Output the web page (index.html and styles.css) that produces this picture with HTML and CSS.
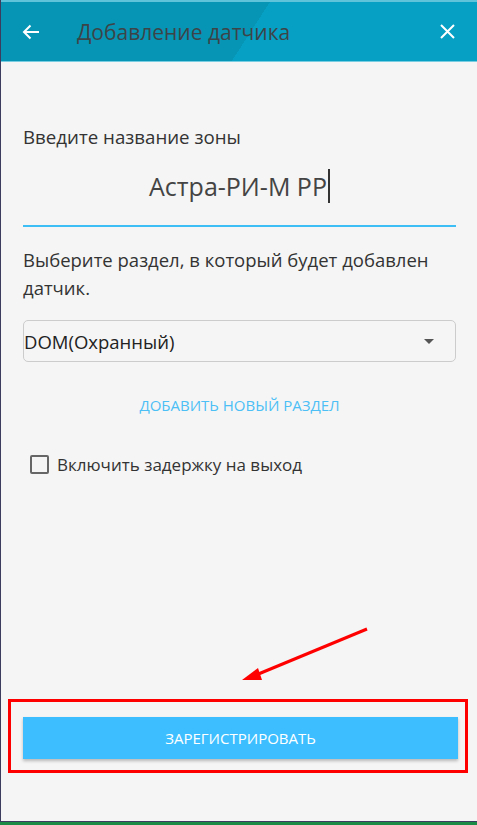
FILE: index.html
```html
<!DOCTYPE html>
<html lang="ru">
<head>
    <meta charset="UTF-8">
    <meta name="viewport" content="width=device-width, initial-scale=1.0">
    <title>Добавление датчика</title>
    <link rel="stylesheet" href="styles.css">
</head>
<body>
    <div class="screen">
        <div class="top-line"></div>
        <header class="app-bar">
            <button class="icon-btn" aria-label="Назад">
                <svg width="18" height="16" viewBox="0 0 18 16">
                    <path d="M17 8H2M8.5 1.5L2 8l6.5 6.5" fill="none" stroke="#fff" stroke-width="2"/>
                </svg>
            </button>
            <h1 class="app-title">Добавление датчика</h1>
            <button class="icon-btn close" aria-label="Закрыть">
                <svg width="15" height="15" viewBox="0 0 15 15">
                    <path d="M1 1l13 13M14 1L1 14" fill="none" stroke="#fff" stroke-width="2"/>
                </svg>
            </button>
        </header>
        <div class="app-bar-edge"></div>

        <main class="content">
            <label class="field-label" for="zone">Введите название зоны</label>
            <div class="zone-input">
                <span id="zone">Астра-РИ-М РР</span><span class="caret"></span>
            </div>

            <p class="hint">Выберите раздел, в который будет добавлен датчик.</p>

            <div class="select">
                <span>DOM(Охранный)</span>
                <span class="select-arrow"></span>
            </div>

            <a href="#" class="add-link">ДОБАВИТЬ НОВЫЙ РАЗДЕЛ</a>

            <label class="check-row">
                <span class="checkbox"></span>
                Включить задержку на выход
            </label>

            <div class="footer">
                <div class="highlight">
                    <button class="register">ЗАРЕГИСТРИРОВАТЬ</button>
                </div>
            </div>
        </main>

        <!-- annotation arrow pointing at the button -->
        <svg class="pointer" width="477" height="825" viewBox="0 0 477 825">
            <path d="M367 629L256 675" stroke="#f00" stroke-width="3" fill="none"/>
            <path d="M242 680L258 668L262 680Z" fill="#f00"/>
        </svg>
    </div>
    <div class="taskbar"></div>
</body>
</html>
```

FILE: styles.css
```css
body {
    margin: 0;
    font-family: 'Open Sans', sans-serif;
    background-color: #f5f5f5;
    color: #333;
}

.screen {
    position: relative;
    display: flex;
    flex-direction: column;
    height: 822px;
    box-sizing: border-box;
    border-left: 1px solid #3b3c5e;
    border-bottom: 1px solid #3b3c5e;
}

.top-line {
    height: 2px;
    background-color: #5fc4da;
}

.app-bar {
    display: flex;
    align-items: center;
    height: 59px;
    background: linear-gradient(122.8deg, #0795b5 226px, #05a0c4 226px);
}

.app-bar-edge {
    height: 1px;
    background-color: #78cde0;
}

.icon-btn {
    background: none;
    border: none;
    padding: 0;
    margin: 0 0 0 21px;
    width: 18px;
    height: 16px;
    display: flex;
}

.icon-btn.close {
    margin: 0 22px 0 auto;
    width: 15px;
    height: 15px;
}

.app-title {
    margin: 0 0 0 37px;
    font-size: 21px;
    font-weight: normal;
    color: #3d4448;
}

.content {
    flex: 1;
    display: flex;
    flex-direction: column;
    padding: 0 21px 0 22px;
}

.field-label {
    margin-top: 62px;
    font-size: 18.7px;
    line-height: 26px;
}

.zone-input {
    display: flex;
    justify-content: center;
    align-items: center;
    height: 54px;
    margin-top: 9px;
    border-bottom: 2px solid #3dbff5;
    font-size: 25px;
    color: #444;
    padding-bottom: 12px;
}

.caret {
    width: 2px;
    height: 34px;
    margin-left: 1px;
    background-color: #333;
}

.hint {
    margin: 19px 0 0;
    font-size: 18.5px;
    line-height: 28px;
}

.select {
    display: flex;
    align-items: center;
    height: 42px;
    margin-top: 18px;
    box-sizing: border-box;
    border: 1px solid #ccc;
    border-radius: 5px;
    font-size: 18.5px;
    color: #222;
}

.select-arrow {
    margin: 0 21px 0 auto;
    border-left: 5px solid transparent;
    border-right: 5px solid transparent;
    border-top: 5px solid #555;
}

.add-link {
    align-self: center;
    margin-top: 33px;
    font-size: 15px;
    color: #4cbff5;
    text-decoration: none;
}

.check-row {
    display: flex;
    align-items: center;
    margin: 38px 0 0 7px;
    font-size: 17px;
    color: #333;
}

.checkbox {
    width: 15px;
    height: 15px;
    margin-right: 8px;
    border: 2px solid #666;
    border-radius: 2px;
}

.footer {
    margin: auto -12px 48px -15px;
}

.highlight {
    border: 3px solid #f00;
    padding: 15px 7px 11px 12px;
}

.register {
    display: block;
    width: 100%;
    height: 42px;
    border: none;
    background-color: #3dbfff;
    color: #fff;
    font-family: 'Open Sans', sans-serif;
    font-size: 15px;
    box-shadow: 0 2px 3px rgba(0, 0, 0, 0.25);
}

.pointer {
    position: absolute;
    left: -1px;
    top: 0;
    pointer-events: none;
}

.taskbar {
    height: 3px;
    background-color: #1a8a45;
}
```
